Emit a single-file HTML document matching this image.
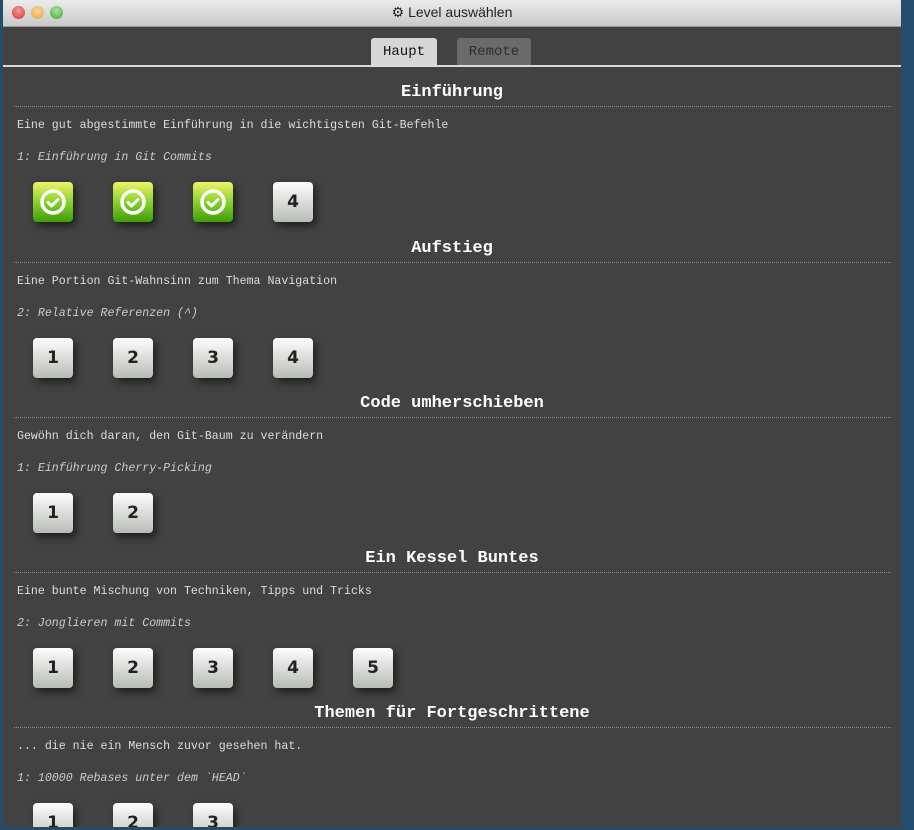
<!DOCTYPE html>
<html><head><meta charset="utf-8"><style>
*{margin:0;padding:0;box-sizing:border-box}
html,body{width:914px;height:830px;overflow:hidden;background:#244d6c}
body{position:relative;font-family:"Liberation Mono","DejaVu Sans Mono",monospace}
#win{position:absolute;left:3px;top:0;width:898px;height:827px;background:#424242;overflow:hidden}
#tb{position:absolute;left:0;top:0;width:898px;height:27px;background:linear-gradient(#ebebeb,#c9c9c9);border-bottom:1px solid #9a9a9a}
.dot{position:absolute;top:6px;width:13px;height:13px;border-radius:50%}
#title{position:absolute;left:0;right:0;top:4px;text-align:center;font:14px "Liberation Sans",sans-serif;color:#222}
.tab{position:absolute;top:38px;height:27px;border-radius:3px 3px 0 0;font-size:14px;line-height:29px;text-align:center}
#line{position:absolute;left:0;top:65px;width:898px;height:2px;background:#d9d9d9}
.sec{position:absolute;left:0;width:898px}
.h{position:absolute;left:0;width:898px;text-align:center;font-weight:bold;font-size:17px;color:#fff;top:-9px;line-height:22px}
.dash{position:absolute;left:11px;width:877px;top:15px;border-top:1px dotted #8a8a8a}
.d{position:absolute;left:14px;top:28px;font-size:11.6px;color:#ddd;line-height:14px;white-space:pre}
.i{position:absolute;left:14px;top:60px;font-size:11.6px;color:#ccc;font-style:italic;line-height:14px;white-space:pre}
.b{position:absolute;top:91px;width:40px;height:40px;border-radius:4px;background:linear-gradient(#fdfdfd,#b8bcb6);box-shadow:3px 4px 8px rgba(0,0,0,.55);font:bold 17px "DejaVu Sans","Liberation Sans",sans-serif;color:#222;text-align:center;line-height:40px}
.g{background:linear-gradient(#ecf46a,#8ad12a 50%,#3f9c0c)}
.g svg{position:absolute;left:6px;top:6px}
</style></head><body>
<div id="win">
<div id="tb">
<div class="dot" style="left:9px;background:radial-gradient(circle at 50% 35%,#f59a9a,#d7302f)"></div>
<div class="dot" style="left:28px;background:radial-gradient(circle at 50% 35%,#f8d9a0,#e39f3c)"></div>
<div class="dot" style="left:47px;background:radial-gradient(circle at 50% 35%,#a9e59a,#3da83a)"></div>
<div id="title">⚙ Level auswählen</div>
</div>
<div class="tab" style="left:368px;width:66px;background:#d6d6d6;color:#111">Haupt</div>
<div class="tab" style="left:454px;width:74px;background:#6a6a6a;color:#2e2e2e">Remote</div>
<div id="line"></div>

<div class="sec" style="top:91px">
<div class="h">Einführung</div><div class="dash"></div>
<div class="d">Eine gut abgestimmte Einführung in die wichtigsten Git-Befehle</div>
<div class="i">1: Einführung in Git Commits</div>
<div class="b g" style="left:30px"><svg width="28" height="28"><circle cx="14" cy="14" r="11" fill="none" stroke="#fff" stroke-width="3.5"/><path d="M9 14.5l3.5 3.5 6.5-6.5" fill="none" stroke="#fff" stroke-width="3" stroke-linecap="round" stroke-linejoin="round"/></svg></div>
<div class="b g" style="left:110px"><svg width="28" height="28"><circle cx="14" cy="14" r="11" fill="none" stroke="#fff" stroke-width="3.5"/><path d="M9 14.5l3.5 3.5 6.5-6.5" fill="none" stroke="#fff" stroke-width="3" stroke-linecap="round" stroke-linejoin="round"/></svg></div>
<div class="b g" style="left:190px"><svg width="28" height="28"><circle cx="14" cy="14" r="11" fill="none" stroke="#fff" stroke-width="3.5"/><path d="M9 14.5l3.5 3.5 6.5-6.5" fill="none" stroke="#fff" stroke-width="3" stroke-linecap="round" stroke-linejoin="round"/></svg></div>
<div class="b" style="left:270px">4</div>
</div>

<div class="sec" style="top:247px">
<div class="h">Aufstieg</div><div class="dash"></div>
<div class="d">Eine Portion Git-Wahnsinn zum Thema Navigation</div>
<div class="i">2: Relative Referenzen (^)</div>
<div class="b" style="left:30px">1</div><div class="b" style="left:110px">2</div><div class="b" style="left:190px">3</div><div class="b" style="left:270px">4</div>
</div>

<div class="sec" style="top:402px">
<div class="h">Code umherschieben</div><div class="dash"></div>
<div class="d">Gewöhn dich daran, den Git-Baum zu verändern</div>
<div class="i">1: Einführung Cherry-Picking</div>
<div class="b" style="left:30px">1</div><div class="b" style="left:110px">2</div>
</div>

<div class="sec" style="top:557px">
<div class="h">Ein Kessel Buntes</div><div class="dash"></div>
<div class="d">Eine bunte Mischung von Techniken, Tipps und Tricks</div>
<div class="i">2: Jonglieren mit Commits</div>
<div class="b" style="left:30px">1</div><div class="b" style="left:110px">2</div><div class="b" style="left:190px">3</div><div class="b" style="left:270px">4</div><div class="b" style="left:350px">5</div>
</div>

<div class="sec" style="top:712px">
<div class="h">Themen für Fortgeschrittene</div><div class="dash"></div>
<div class="d">... die nie ein Mensch zuvor gesehen hat.</div>
<div class="i">1: 10000 Rebases unter dem `HEAD`</div>
<div class="b" style="left:30px">1</div><div class="b" style="left:110px">2</div><div class="b" style="left:190px">3</div>
</div>
</div>
</body></html>
